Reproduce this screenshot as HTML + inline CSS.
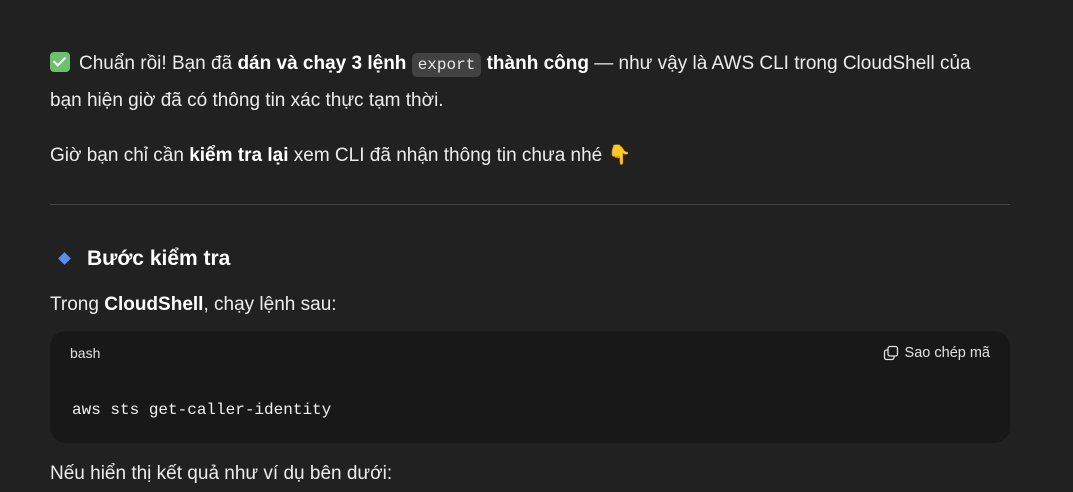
<!DOCTYPE html>
<html><head><meta charset="utf-8"><style>
body{margin:0;background:#212121;width:1073px;height:474px;overflow:hidden;font-family:"Liberation Sans",sans-serif;color:#ececec;font-size:19px}
.p{position:absolute;left:50px;white-space:nowrap;line-height:36px}
b{font-weight:bold;color:#fff}
code{font-family:"Liberation Mono",monospace;font-size:16px;background:#424242;border-radius:5px;padding:3px 6px;color:#e8e8e8}
.chk{display:inline-block;width:20px;height:20px;background:#6cc070;border-radius:4px;vertical-align:-3px;position:relative;margin-right:9px}
.chk:after{content:"";position:absolute;left:6px;top:2px;width:5px;height:10px;border:solid #fff;border-width:0 2.5px 2.5px 0;transform:rotate(45deg)}
</style></head><body>
<div class="p" style="top:46px"><span class="chk"></span>Chuẩn rồi! Bạn đã <b>dán và chạy 3 lệnh</b> <code>export</code> <b>thành công</b> — như vậy là AWS CLI trong CloudShell của</div>
<div class="p" style="top:83px">bạn hiện giờ đã có thông tin xác thực tạm thời.</div>
<div class="p" style="top:138px">Giờ bạn chỉ cần <b>kiểm tra lại</b> xem CLI đã nhận thông tin chưa nhé 👇</div>
<div style="position:absolute;left:50px;top:204px;width:960px;height:1px;background:#444"></div>
<div style="position:absolute;left:60px;top:254px;width:9px;height:9px;background:#5b8ee6;transform:rotate(45deg)"></div>
<div class="p" style="top:241px;left:87px;font-size:21px;font-weight:bold;color:#fff">Bước kiểm tra</div>
<div class="p" style="top:287px">Trong <b>CloudShell</b>, chạy lệnh sau:</div>
<div style="position:absolute;left:50px;top:331px;width:960px;height:112px;background:#181818;border-radius:16px"></div>
<div style="position:absolute;left:70px;top:345px;font-size:14px;color:#e0e0e0">bash</div>
<div style="position:absolute;right:83px;top:345px;font-size:14.5px;color:#e0e0e0;display:flex;align-items:center;gap:6px">
<svg width="16" height="16" viewBox="0 0 16 16" fill="none" stroke="#e0e0e0" stroke-width="1.3"><rect x="5" y="1.5" width="9.5" height="9.5" rx="2"/><path d="M5 5H3.5A2 2 0 0 0 1.5 7v5.5a2 2 0 0 0 2 2H9a2 2 0 0 0 2-2V11"/></svg>Sao chép mã</div>
<div style="position:absolute;left:72px;top:401px;font-family:'Liberation Mono',monospace;font-size:16px;color:#f0f0f0">aws sts get-caller-identity</div>
<div class="p" style="top:456px">Nếu hiển thị kết quả như ví dụ bên dưới:</div>
</body></html>
